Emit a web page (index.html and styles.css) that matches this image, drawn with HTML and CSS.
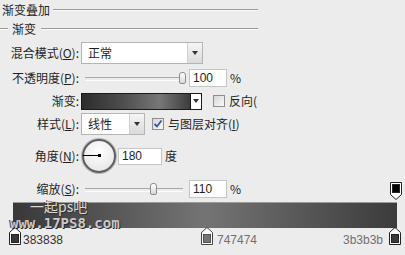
FILE: index.html
```html
<!DOCTYPE html><html><head><meta charset="utf-8">
<meta name="viewport" content="initial-scale=1.0, width=device-width">
<title>渐变叠加</title>
<link rel="stylesheet" href="styles.css">
</head>
<body>

<div class="panel">
  <div class="title"><span>渐变叠加</span><i class="rule"></i></div>
  <div class="group"><i class="rule lead"></i><span>渐变</span><i class="rule"></i></div>

  <div class="row r-blend">
    <label class="lbl">混合模式(<u>O</u>):</label>
    <div class="select wide"><span>正常</span><b class="arrow"></b></div>
  </div>

  <div class="row r-opacity">
    <label class="lbl">不透明度(<u>P</u>):</label>
    <div class="slider"><i class="thumb" style="left:94px"></i></div>
    <div class="num">100</div><span class="unit">%</span>
  </div>

  <div class="row r-grad">
    <label class="lbl">渐变:</label>
    <div class="grad-pick"></div><b class="grad-arrow"><i></i></b>
    <span class="check"></span><span class="ctext">反向(</span>
  </div>

  <div class="row r-style">
    <label class="lbl">样式(<u>L</u>):</label>
    <div class="select small"><span>线性</span><b class="arrow"></b></div>
    <span class="check on">
      <svg width="10" height="10" viewBox="0 0 10 10"><path d="M1.5 5 L4 7.5 L8.5 1.5" fill="none" stroke="#3455a8" stroke-width="1.8"/></svg>
    </span>
    <span class="ctext">与图层对齐(<u>I</u>)</span>
  </div>

  <div class="row r-angle">
    <label class="lbl">角度(<u>N</u>):</label>
    <div class="dial"></div>
    <div class="num angle">180</div><span class="unit">度</span>
  </div>
</div>

<div class="row r-scale">
  <label class="lbl">缩放(<u>S</u>):</label>
  <div class="slider"><i class="thumb" style="left:65px"></i></div>
  <div class="num">110</div><span class="unit">%</span>
  <svg class="top-stop" width="12" height="18" viewBox="0 0 12 18">
    <path d="M0.5 0.5 H11.5 V12.5 L6 17.5 L0.5 12.5 Z" fill="#fff" stroke="#222"/>
    <rect x="2.5" y="2.5" width="7" height="8" fill="#000" stroke="#222"/>
  </svg>
</div>

<div class="editor">
  <div class="bar"></div>
  <div class="stops">
    <svg width="12" height="18" viewBox="0 0 12 18">
      <path d="M0.5 5.5 L6 0.5 L11.5 5.5 V17.5 H0.5 Z" fill="#fff" stroke="#222"/>
      <rect x="2.5" y="7.5" width="7" height="8" fill="#383838" stroke="#222"/>
    </svg>
    <span class="stop-label first">383838</span>
    <svg width="12" height="18" viewBox="0 0 12 18">
      <path d="M0.5 5.5 L6 0.5 L11.5 5.5 V17.5 H0.5 Z" fill="#fff" stroke="#444"/>
      <rect x="2.5" y="7.5" width="7" height="8" fill="#747474" stroke="#555"/>
    </svg>
    <span class="stop-label mid">747474</span>
    <span class="stop-label last">3b3b3b</span>
    <svg class="end" width="12" height="18" viewBox="0 0 12 18">
      <path d="M0.5 5.5 L6 0.5 L11.5 5.5 V17.5 H0.5 Z" fill="#fff" stroke="#222"/>
      <rect x="2.5" y="7.5" width="7" height="8" fill="#3b3b3b" stroke="#222"/>
    </svg>
  </div>
  <div class="watermark">
    <span class="wm-cn">一起ps吧</span>
    <span class="wm-url">www.17PS8.com</span>
  </div>
</div>

</body>
</html>
```

FILE: styles.css
```css
html,body,div,label,span{margin:0;padding:0;}
*{box-sizing:border-box;}
body{
  color:#1e1e1e;
  font-size:12px;
  line-height:14px;
  font-family:"Noto Sans CJK SC","Liberation Sans",sans-serif;
  background:#ececec;
  width:405px;
  height:255px;
  overflow:hidden;
}
u{text-decoration:underline;text-underline-offset:1px;}

.panel{width:258px;overflow:hidden;}
.title,.group{display:flex;align-items:center;}
.title{height:20px;padding-left:2px;}
.group{height:18px;}
.rule{
  flex:1;height:2px;
  border-top:1px solid #9a9a9a;
  border-bottom:1px solid #fafafa;
  margin-left:3px;
}
.group .rule{margin-left:5px;}
.group .rule.lead{flex:none;width:8px;margin:0 4px 0 0;}

.row{display:flex;align-items:center;}
.row > *{flex-shrink:0;}
.lbl{width:79px;text-align:right;margin-right:2px;white-space:nowrap;}
.r-blend{margin-top:4px;height:22px;}
.r-opacity{height:28px;}
.r-grad{height:18px;}
.r-style{margin-top:2px;height:24px;}
.r-angle{margin-top:2px;height:36px;}
.r-scale{margin-top:4px;height:22px;}

.select{
  display:flex;align-items:center;height:22px;
  background:#fff;border:1px solid #b4b4b4;
}
.select span{padding-left:6px;}
.select.wide{width:122px;}
.select.small{width:64px;}
.arrow{
  margin-left:auto;width:15px;height:20px;
  border-left:1px solid #d0d0d0;
  background:linear-gradient(#f6f6f6,#dadada);
  display:flex;align-items:center;justify-content:center;
}
.arrow::after,.grad-arrow i{
  content:"";display:block;
  border-left:3px solid transparent;
  border-right:3px solid transparent;
  border-top:4px solid #333;
}

.slider{position:relative;width:98px;height:12px;margin-left:4px;}
.slider::before{
  content:"";position:absolute;left:0;right:0;top:5px;height:2px;
  border-top:1px solid #a8a8a8;border-bottom:1px solid #fdfdfd;
}
.thumb{
  position:absolute;top:0;width:7px;height:12px;
  border:1px solid #8c8c8c;border-radius:3px 3px 2px 2px;
  background:linear-gradient(#fff,#d8d8d8);
}
.num{
  font-family:"Liberation Sans",Arial,sans-serif;
  width:38px;height:18px;line-height:16px;
  margin-left:6px;padding-left:3px;
  background:#fff;border:1px solid #c6c6c6;
}
.num.angle{width:44px;height:17px;line-height:15px;margin-left:2px;}
.unit{margin-left:3px;}
.r-scale .num{margin-left:6px;}

.grad-pick{
  width:110px;height:17px;border:1px solid #1a1a1a;
  background:linear-gradient(90deg,#2c2c2c 0%,#505050 40%,#777 72%,#3c3c3c 100%);
}
.grad-arrow{
  width:11px;height:17px;border:1px solid #1a1a1a;border-left:none;
  background:#fff;display:flex;align-items:center;justify-content:center;
}
.check{
  width:12px;height:12px;margin:0 4px 0 11px;
  border:1px solid #8e8e8e;
  background:linear-gradient(135deg,#d6d6d6,#fafafa);
  display:flex;align-items:center;justify-content:center;
}
.r-style .check{margin-left:7px;}
.ctext{white-space:nowrap;}

.dial{
  position:relative;width:34px;height:34px;margin-left:1px;
  border-radius:50%;border:2px solid #5e5e5e;
  box-shadow:0 0 0 1px #b5b5b5;
  background:radial-gradient(circle at 50% 35%,#fff,#e2e2e2);
}
.dial::before{
  content:"";position:absolute;left:-1px;top:14px;width:16px;height:1px;background:#000;
}
.dial::after{
  content:"";position:absolute;left:14px;top:13px;width:3px;height:3px;background:#000;
}

.top-stop{margin-left:auto;margin-right:3px;align-self:flex-end;}

.editor{position:relative;margin-top:2px;}
.bar{
  margin:0 8px 0 13px;height:26px;
  border-top:1px solid #9a9a9a;
  background:linear-gradient(90deg,#383838 0%,#747474 50%,#3b3b3b 100%);
}
.stops{
  display:flex;align-items:flex-end;height:18px;margin-top:-1px;
  padding:0 4px 0 9px;
}
.stop-label{
  font-family:"Liberation Sans",Arial,sans-serif;
  font-size:12px;line-height:12px;color:#707070;
  margin-bottom:-1px;
}
.stop-label.first{width:178px;margin-left:2px;color:#333;}
.stop-label.mid{margin-left:4px;}
.stop-label.last{margin-left:auto;}
.stops .end{margin-left:6px;}

.watermark{position:absolute;left:10px;top:-3px;display:flex;flex-direction:column;}
.wm-cn{
  margin-left:20px;font-size:14px;line-height:15px;color:#d8d8d8;
  text-shadow:1px 1px 0 #333,-1px 0 0 #444;
}
.wm-url{
  margin-top:3px;
  font-family:"DejaVu Sans Mono",monospace;font-weight:bold;
  font-size:14px;line-height:13px;color:#c8c8c8;
  text-shadow:1px 1px 0 #2a2a2a,-1px 0 0 #444;
}
```
